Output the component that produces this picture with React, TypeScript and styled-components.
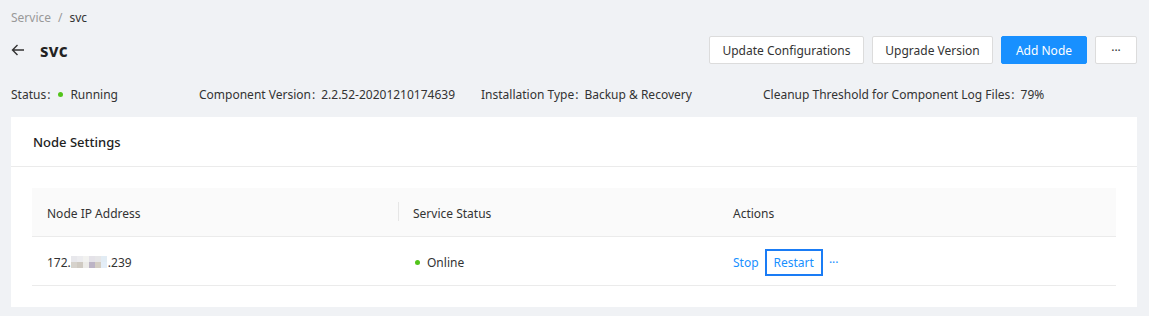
import React from "react";
import styled, { createGlobalStyle } from "styled-components";

const Global = createGlobalStyle`
  html, body { margin: 0; padding: 0; background: #f0f2f5; }
  body { font-family: "Noto Sans", "Open Sans", sans-serif; font-size: 12px; color: #333; }
  * { box-sizing: border-box; }
`;

const Page = styled.div`
  padding: 8px 12px 8px 11px;
  display: flex;
  flex-direction: column;
`;

const Breadcrumb = styled.div`
  display: flex;
  align-items: center;
  gap: 7px;
  height: 18px;
  font-size: 12px;
  color: #999;
`;
const Crumb = styled.span<{ $current?: boolean }>`
  color: ${(p) => (p.$current ? "#333" : "#999")};
`;

const TitleRow = styled.div`
  display: flex;
  align-items: center;
  justify-content: space-between;
  margin-top: 10px;
  height: 28px;
`;
const TitleLeft = styled.div`
  display: flex;
  align-items: center;
  gap: 15px;
`;
const BackBtn = styled.span`
  display: flex;
  width: 14px;
  height: 14px;
  color: #333;
  margin-top: -1px;
`;
const Title = styled.h1`
  margin: 0;
  font-size: 17px;
  font-weight: 700;
  color: #222;
  letter-spacing: 0.2px;
`;
const Actions = styled.div`
  display: flex;
  gap: 8px;
`;
const Button = styled.button<{ $primary?: boolean; $w?: number }>`
  height: 28px;
  padding: 0;
  white-space: nowrap;
  font-family: inherit;
  font-size: 12px;
  border-radius: 2px;
  border: 1px solid ${(p) => (p.$primary ? "#1890ff" : "#dcdcdc")};
  background: ${(p) => (p.$primary ? "#1890ff" : "#fff")};
  color: ${(p) => (p.$primary ? "#fff" : "#333")};
  ${(p) => (p.$w ? `width: ${p.$w}px;` : "")}
  display: flex;
  align-items: center;
  justify-content: center;
`;

const InfoRow = styled.div`
  display: grid;
  grid-template-columns: 188px 282px 282px 1fr;
  margin-top: 21px;
  height: 18px;
  align-items: center;
`;
const InfoItem = styled.div`
  display: flex;
  align-items: center;
  white-space: nowrap;
`;
const Colon = styled.span`
  margin: 0 6px 0 1px;
`;
const Dot = styled.span`
  width: 5px;
  height: 5px;
  border-radius: 50%;
  background: #52c41a;
  display: inline-block;
  margin: 0 7px 0 2px;
`;

const Card = styled.section`
  margin-top: 14px;
  background: #fff;
  display: flex;
  flex-direction: column;
`;
const CardHeader = styled.div`
  height: 50px;
  padding: 1px 22px 0;
  display: flex;
  align-items: center;
  font-size: 13px;
  font-weight: 500;
  color: #222;
  border-bottom: 1px solid #ebebeb;
`;
const CardBody = styled.div`
  padding: 21px 21px 21px 21px;
`;

const Table = styled.div`
  display: grid;
  grid-template-columns: 366px 320px 1fr;
`;
const HeadCell = styled.div<{ $divider?: boolean }>`
  height: 49px;
  background: #fafafa;
  border-bottom: 1px solid #ebebeb;
  padding: 2px 15px 0;
  display: flex;
  align-items: center;
  color: #333;
  position: relative;
  ${(p) =>
    p.$divider
      ? `&::before { content: ""; position: absolute; left: 0; top: 14px; height: 19px; width: 1px; background: #e6e6e6; }`
      : ""}
`;
const Cell = styled.div`
  height: 49px;
  border-bottom: 1px solid #ebebeb;
  padding: 2px 15px 0;
  display: flex;
  align-items: center;
  color: #333;
`;
const Blur = styled.span`
  display: inline-grid;
  grid-template-columns: repeat(6, 6px);
  grid-template-rows: 6px 6px;
  margin: 0 1px 0 0;
`;
const Px = styled.span<{ $c: string }>`
  background: ${(p) => p.$c};
`;
const Link = styled.span<{ $boxed?: boolean }>`
  color: #1890ff;
  display: inline-flex;
  align-items: center;
  height: 27px;
  padding: 0 ${(p) => (p.$boxed ? "7px" : "0")};
  border: ${(p) => (p.$boxed ? "2px solid #1a7cf5" : "none")};
`;
const ActionGroup = styled.div`
  display: flex;
  align-items: center;
  gap: 6px;
`;

const blurColors = [
  "#e8e8ec", "#ececef", "#f2f2f0", "#e4e2e8", "#e6e6e8", "#e2ecf4",
  "#d6d2cc", "#cfcac2", "#ecebe8", "#bcb4c6", "#d4cec4", "#e4eef8",
];

export default function App() {
  return (
    <>
      <Global />
      <Page>
        <Breadcrumb>
          <Crumb>Service</Crumb>
          <Crumb>/</Crumb>
          <Crumb $current>svc</Crumb>
        </Breadcrumb>
        <TitleRow>
          <TitleLeft>
            <BackBtn>
              <svg viewBox="0 0 14 14" width="14" height="14" fill="none" stroke="currentColor" strokeWidth="1.4">
                <path d="M13 7H1.5M6.5 2L1.5 7l5 5" />
              </svg>
            </BackBtn>
            <Title>svc</Title>
          </TitleLeft>
          <Actions>
            <Button $w={155}>Update Configurations</Button>
            <Button $w={121}>Upgrade Version</Button>
            <Button $primary $w={86}>Add Node</Button>
            <Button $w={42}>···</Button>
          </Actions>
        </TitleRow>
        <InfoRow>
          <InfoItem>Status<Colon>:</Colon><Dot />Running</InfoItem>
          <InfoItem>Component Version<Colon>:</Colon>2.2.52-20201210174639</InfoItem>
          <InfoItem>Installation Type<Colon>:</Colon>Backup &amp; Recovery</InfoItem>
          <InfoItem>Cleanup Threshold for Component Log Files<Colon>:</Colon>79%</InfoItem>
        </InfoRow>
        <Card>
          <CardHeader>Node Settings</CardHeader>
          <CardBody>
            <Table>
              <HeadCell>Node IP Address</HeadCell>
              <HeadCell $divider>Service Status</HeadCell>
              <HeadCell>Actions</HeadCell>
              <Cell>
                172.
                <Blur>
                  {blurColors.map((c, i) => (
                    <Px key={i} $c={c} />
                  ))}
                </Blur>
                .239
              </Cell>
              <Cell>
                <Dot />
                Online
              </Cell>
              <Cell>
                <ActionGroup>
                  <Link>Stop</Link>
                  <Link $boxed>Restart</Link>
                  <Link>···</Link>
                </ActionGroup>
              </Cell>
            </Table>
          </CardBody>
        </Card>
      </Page>
    </>
  );
}
